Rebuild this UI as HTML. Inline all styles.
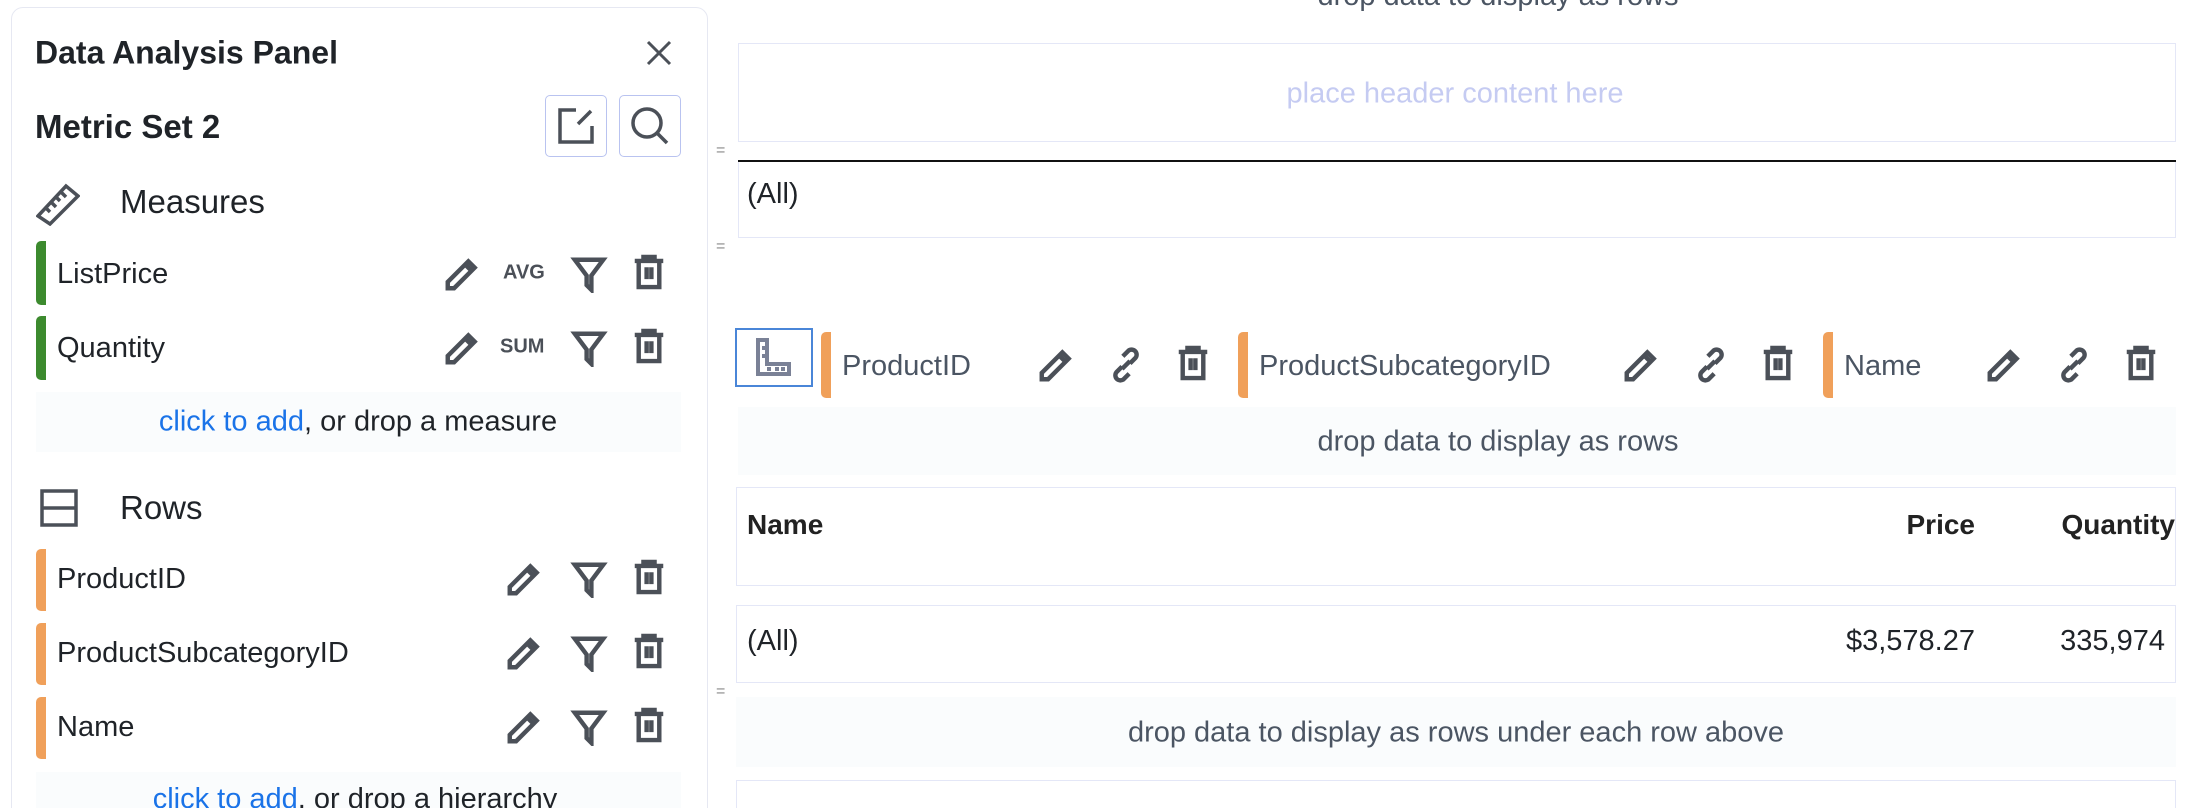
<!DOCTYPE html>
<html><head><meta charset="utf-8"><style>
*{margin:0;padding:0;box-sizing:border-box}
html,body{width:2196px;height:808px;overflow:hidden}
body{background:#fff;font-family:"Liberation Sans",sans-serif;color:#1f2328;position:relative}
.a{position:absolute;white-space:nowrap}
.ic{position:absolute;width:38px;height:38px;fill:none;stroke:#4b5058;stroke-width:2.8;stroke-linejoin:miter}
.bar{position:absolute;width:10px;border-radius:5px 0 0 5px}
.t24{font-size:29px;line-height:34px}
.box{position:absolute;border:1.5px solid #e4e7f7}
.faint{position:absolute;background:#fafcfd}
.mid{transform:translateY(-50%)}
</style></head><body>
<svg width="0" height="0" style="position:absolute">
<symbol id="pen" viewBox="0 0 24 24"><path d="M3 21V17L16 4L20 8L7 21Z M14 6L18 10"/></symbol>
<symbol id="fil" viewBox="0 0 24 24"><path d="M3 3H21L13.5 13V22L10.5 19V13Z"/></symbol>
<symbol id="tr" viewBox="0 0 24 24"><path d="M3 5H21M8.5 5V2.5H15.5V5M5.5 5V21.5H18.5V5M10.5 9V16.5M13.5 9V16.5"/></symbol>
<symbol id="lnk" viewBox="0 0 24 24"><path d="M9.5 13l-3.5 3.5a3.2 3.2 0 0 0 4.5 4.5l3.5-3.5 M14.5 11l3.5-3.5a3.2 3.2 0 0 0-4.5-4.5l-3.5 3.5 M9.5 14.5L14.5 9.5"/></symbol>
</svg>

<!-- panel -->
<div style="position:absolute;left:11px;top:7px;width:697px;height:900px;border:1.5px solid #e6e8f2;border-radius:12px"></div>
<div class="a mid" style="left:35px;top:53px;font-size:32px;font-weight:bold">Data Analysis Panel</div>
<svg class="a" style="left:645px;top:39px" width="28" height="28" viewBox="0 0 28 28"><path d="M3 3L25 25M25 3L3 25" stroke="#4b5058" stroke-width="3"/></svg>
<div class="a mid" style="left:35px;top:127px;font-size:33px;font-weight:bold">Metric Set 2</div>
<div style="position:absolute;left:545px;top:95px;width:62px;height:62px;border:1.5px solid #b9c3f0;border-radius:5px"></div>
<svg class="a" style="left:556px;top:106px" width="40" height="40" viewBox="0 0 40 40" fill="none" stroke="#4b5058" stroke-width="3.5"><path d="M20 4H4V36H36V20 M22 18L35 5"/></svg>
<div style="position:absolute;left:619px;top:95px;width:62px;height:62px;border:1.5px solid #b9c3f0;border-radius:5px"></div>
<svg class="a" style="left:629px;top:105px" width="42" height="42" viewBox="0 0 42 42" fill="none" stroke="#4b5058" stroke-width="3.5"><circle cx="18" cy="18" r="14"/><path d="M28 28L38 38"/></svg>

<svg class="a" style="left:36px;top:182px" width="44" height="44" viewBox="0 0 44 44" fill="none" stroke="#4b5058" stroke-width="3.5"><path d="M2 34L30 4L42 14L14 42Z M10 26l4 4 M15 20l5 5 M20 15l4 4 M25 10l5 5"/></svg>
<div class="a mid" style="left:120px;top:202px;font-size:33px">Measures</div>

<div class="bar" style="left:36px;top:241px;height:64px;background:#3c8a2e"></div>
<div class="a mid t24" style="left:57px;top:274px">ListPrice</div>
<svg class="ic" style="left:443px;top:255px"><use href="#pen"/></svg>
<div class="a mid" style="left:503px;top:273px;font-size:20px;font-weight:bold;color:#4b5058">AVG</div>
<svg class="ic" style="left:570px;top:255px"><use href="#fil"/></svg>
<svg class="ic" style="left:630px;top:253px"><use href="#tr"/></svg>

<div class="bar" style="left:36px;top:316px;height:64px;background:#3c8a2e"></div>
<div class="a mid t24" style="left:57px;top:348px">Quantity</div>
<svg class="ic" style="left:443px;top:329px"><use href="#pen"/></svg>
<div class="a mid" style="left:500px;top:347px;font-size:20px;font-weight:bold;color:#4b5058">SUM</div>
<svg class="ic" style="left:570px;top:329px"><use href="#fil"/></svg>
<svg class="ic" style="left:630px;top:327px"><use href="#tr"/></svg>

<div class="faint" style="left:36px;top:392px;width:645px;height:60px"></div>
<div class="a mid" style="left:358px;top:422px;transform:translate(-50%,-50%);font-size:29px"><span style="color:#1a73e8">click to add</span>, or drop a measure</div>

<svg class="a" style="left:40px;top:489px" width="38" height="38" viewBox="0 0 38 38" fill="none" stroke="#4b5058" stroke-width="3.5"><rect x="2" y="2" width="34" height="34"/><path d="M2 19H36"/></svg>
<div class="a mid" style="left:120px;top:508px;font-size:33px">Rows</div>

<div class="bar" style="left:36px;top:549px;height:62px;background:#f0a05a"></div>
<div class="a mid t24" style="left:57px;top:579px">ProductID</div>
<svg class="ic" style="left:505px;top:560px"><use href="#pen"/></svg>
<svg class="ic" style="left:570px;top:560px"><use href="#fil"/></svg>
<svg class="ic" style="left:630px;top:558px"><use href="#tr"/></svg>

<div class="bar" style="left:36px;top:623px;height:62px;background:#f0a05a"></div>
<div class="a mid t24" style="left:57px;top:653px">ProductSubcategoryID</div>
<svg class="ic" style="left:505px;top:634px"><use href="#pen"/></svg>
<svg class="ic" style="left:570px;top:634px"><use href="#fil"/></svg>
<svg class="ic" style="left:630px;top:632px"><use href="#tr"/></svg>

<div class="bar" style="left:36px;top:697px;height:62px;background:#f0a05a"></div>
<div class="a mid t24" style="left:57px;top:727px">Name</div>
<svg class="ic" style="left:505px;top:708px"><use href="#pen"/></svg>
<svg class="ic" style="left:570px;top:708px"><use href="#fil"/></svg>
<svg class="ic" style="left:630px;top:706px"><use href="#tr"/></svg>

<div class="faint" style="left:36px;top:772px;width:645px;height:60px"></div>
<div class="a" style="left:355px;top:783px;transform:translateX(-50%);font-size:29px"><span style="color:#1a73e8">click to add</span>, or drop a hierarchy</div>

<!-- right -->
<div class="a" style="left:716px;top:142px;font-size:16px;color:#888">=</div>
<div class="a" style="left:716px;top:238px;font-size:16px;color:#888">=</div>
<div class="a" style="left:716px;top:683px;font-size:16px;color:#888">=</div>

<div class="a" style="left:1498px;top:-20px;transform:translateX(-50%);font-size:29px;color:#4b5563">drop data to display as rows</div>
<div class="box" style="left:738px;top:43px;width:1438px;height:99px"></div>
<div class="a mid" style="left:1455px;top:94px;transform:translate(-50%,-50%);font-size:29px;color:#c5cbf2">place header content here</div>
<div style="position:absolute;left:738px;top:160px;width:1438px;height:2px;background:#111"></div>
<div class="box" style="left:738px;top:162px;width:1438px;height:76px;border-top:none"></div>
<div class="a mid t24" style="left:747px;top:194px">(All)</div>

<div style="position:absolute;left:735px;top:328px;width:78px;height:59px;border:2px solid #4a86d8"></div>
<svg class="a" style="left:755px;top:338px" width="36" height="38" viewBox="0 0 36 38" fill="none" stroke="#7a8196" stroke-width="4"><path d="M3 2H12V26H34V36H3Z M7 10h4 M7 18h4 M14 33v-4 M22 33v-4 M28 33v-4"/></svg>

<div class="bar" style="left:821px;top:332px;height:66px;background:#f0a05a"></div>
<div class="a mid t24" style="left:842px;top:366px;color:#4b5563">ProductID</div>
<svg class="ic" style="left:1037px;top:346px"><use href="#pen"/></svg>
<svg class="ic" style="left:1107px;top:346px"><use href="#lnk"/></svg>
<svg class="ic" style="left:1174px;top:344px"><use href="#tr"/></svg>

<div class="bar" style="left:1238px;top:332px;height:66px;background:#f0a05a"></div>
<div class="a mid t24" style="left:1259px;top:366px;color:#4b5563">ProductSubcategoryID</div>
<svg class="ic" style="left:1622px;top:346px"><use href="#pen"/></svg>
<svg class="ic" style="left:1692px;top:346px"><use href="#lnk"/></svg>
<svg class="ic" style="left:1759px;top:344px"><use href="#tr"/></svg>

<div class="bar" style="left:1823px;top:332px;height:66px;background:#f0a05a"></div>
<div class="a mid t24" style="left:1844px;top:366px;color:#4b5563">Name</div>
<svg class="ic" style="left:1985px;top:346px"><use href="#pen"/></svg>
<svg class="ic" style="left:2055px;top:346px"><use href="#lnk"/></svg>
<svg class="ic" style="left:2122px;top:344px"><use href="#tr"/></svg>

<div class="faint" style="left:738px;top:407px;width:1438px;height:68px"></div>
<div class="a mid" style="left:1498px;top:442px;transform:translate(-50%,-50%);font-size:29px;color:#4b5563">drop data to display as rows</div>

<div class="box" style="left:736px;top:487px;width:1440px;height:99px"></div>
<div class="a mid" style="left:747px;top:525px;font-size:28px;font-weight:bold;color:#222">Name</div>
<div class="a mid" style="right:221px;top:525px;font-size:28px;font-weight:bold;color:#222">Price</div>
<div class="a mid" style="right:21px;top:525px;font-size:28px;font-weight:bold;color:#222">Quantity</div>

<div class="box" style="left:736px;top:605px;width:1440px;height:78px"></div>
<div class="a mid t24" style="left:747px;top:641px">(All)</div>
<div class="a mid t24" style="right:221px;top:641px">$3,578.27</div>
<div class="a mid t24" style="right:31px;top:641px">335,974</div>

<div class="faint" style="left:736px;top:697px;width:1440px;height:70px"></div>
<div class="a mid" style="left:1456px;top:733px;transform:translate(-50%,-50%);font-size:29px;color:#4b5563">drop data to display as rows under each row above</div>
<div class="box" style="left:736px;top:780px;width:1440px;height:60px"></div>
</body></html>
